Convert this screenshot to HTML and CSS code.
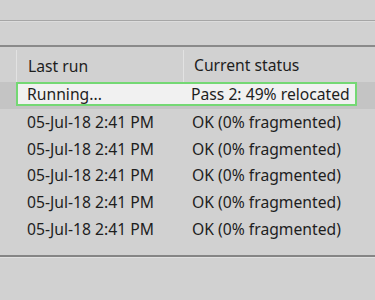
FILE: index.html
```html
<!DOCTYPE html>
<html lang="en">
<head>
  <meta charset="UTF-8">
  <title>Optimize Drives</title>
  <link rel="stylesheet" href="styles.css">
</head>
<body>

  <div class="toolbar"></div>
  <div class="strip"></div>

  <div class="drive-list">
    <!-- column headers -->
    <div class="list-row list-head">
      <div class="gutter"></div>
      <div class="cell col-run">Last run</div>
      <div class="cell col-status">Current status</div>
    </div>

    <div class="list-row selected">
      <div class="gutter"></div>
      <div class="focus-box">
        <div class="cell col-run">Running...</div>
        <div class="cell col-status">Pass 2: 49% relocated</div>
      </div>
    </div>

    <div class="list-row">
      <div class="gutter"></div>
      <div class="cell col-run">05-Jul-18 2:41 PM</div>
      <div class="cell col-status">OK (0% fragmented)</div>
    </div>
    <div class="list-row">
      <div class="gutter"></div>
      <div class="cell col-run">05-Jul-18 2:41 PM</div>
      <div class="cell col-status">OK (0% fragmented)</div>
    </div>
    <div class="list-row">
      <div class="gutter"></div>
      <div class="cell col-run">05-Jul-18 2:41 PM</div>
      <div class="cell col-status">OK (0% fragmented)</div>
    </div>
    <div class="list-row">
      <div class="gutter"></div>
      <div class="cell col-run">05-Jul-18 2:41 PM</div>
      <div class="cell col-status">OK (0% fragmented)</div>
    </div>
    <div class="list-row">
      <div class="gutter"></div>
      <div class="cell col-run">05-Jul-18 2:41 PM</div>
      <div class="cell col-status">OK (0% fragmented)</div>
    </div>
  </div>

  <div class="footer"></div>

</body>
</html>
```

FILE: styles.css
```css
body {
  margin: 0;
  background-color: #d1d1d1;
  font-family: 'Noto Sans', 'Open Sans', sans-serif;
  font-size: 15.7px;
  color: #1e1e1e;
  overflow: hidden;
}

.toolbar {
  height: 20px;
  border-bottom: 1px solid #a6a6a6;
  box-shadow: 0 1px 0 #dcdcdc;
}

.strip {
  height: 24px;
  border-bottom: 2px solid #8a8a8a;
}

.drive-list {
  padding-bottom: 13px;
  border-bottom: 2px solid #858585;
}

.list-row {
  display: flex;
  height: 26.5px;
  align-items: center;
}

.list-row:nth-child(n+3) {
  height: 26.8px;
}

.gutter {
  width: 16px;
  flex-shrink: 0;
  align-self: stretch;
}

.cell {
  white-space: nowrap;
}

.col-run {
  width: 155px;
  padding-left: 11px;
}

.col-status {
  padding-left: 10px;
}

/* header row */
.list-head {
  height: 35px;
}

.list-head .gutter {
  margin-top: 3px;
  border-right: 1px solid #e2e2e2;
}

.list-head .col-run {
  width: 155px;
  align-self: stretch;
  display: flex;
  align-items: center;
  border-right: 1px solid #e2e2e2;
  margin-top: 3px;
}

/* selected row */
.list-row.selected {
  background-color: #c4c4c4;
  align-items: flex-start;
}

.focus-box {
  display: flex;
  align-items: center;
  width: 337px;
  height: 20px;
  background-color: #f1f1f1;
  border: 2px solid #74d874;
}

.focus-box .col-run {
  width: 153px;
  padding-left: 9px;
}

.focus-box .col-status {
  padding-left: 11px;
}

.footer {
  height: 44px;
  border-top: 1px solid #e0e0e0;
}
```
